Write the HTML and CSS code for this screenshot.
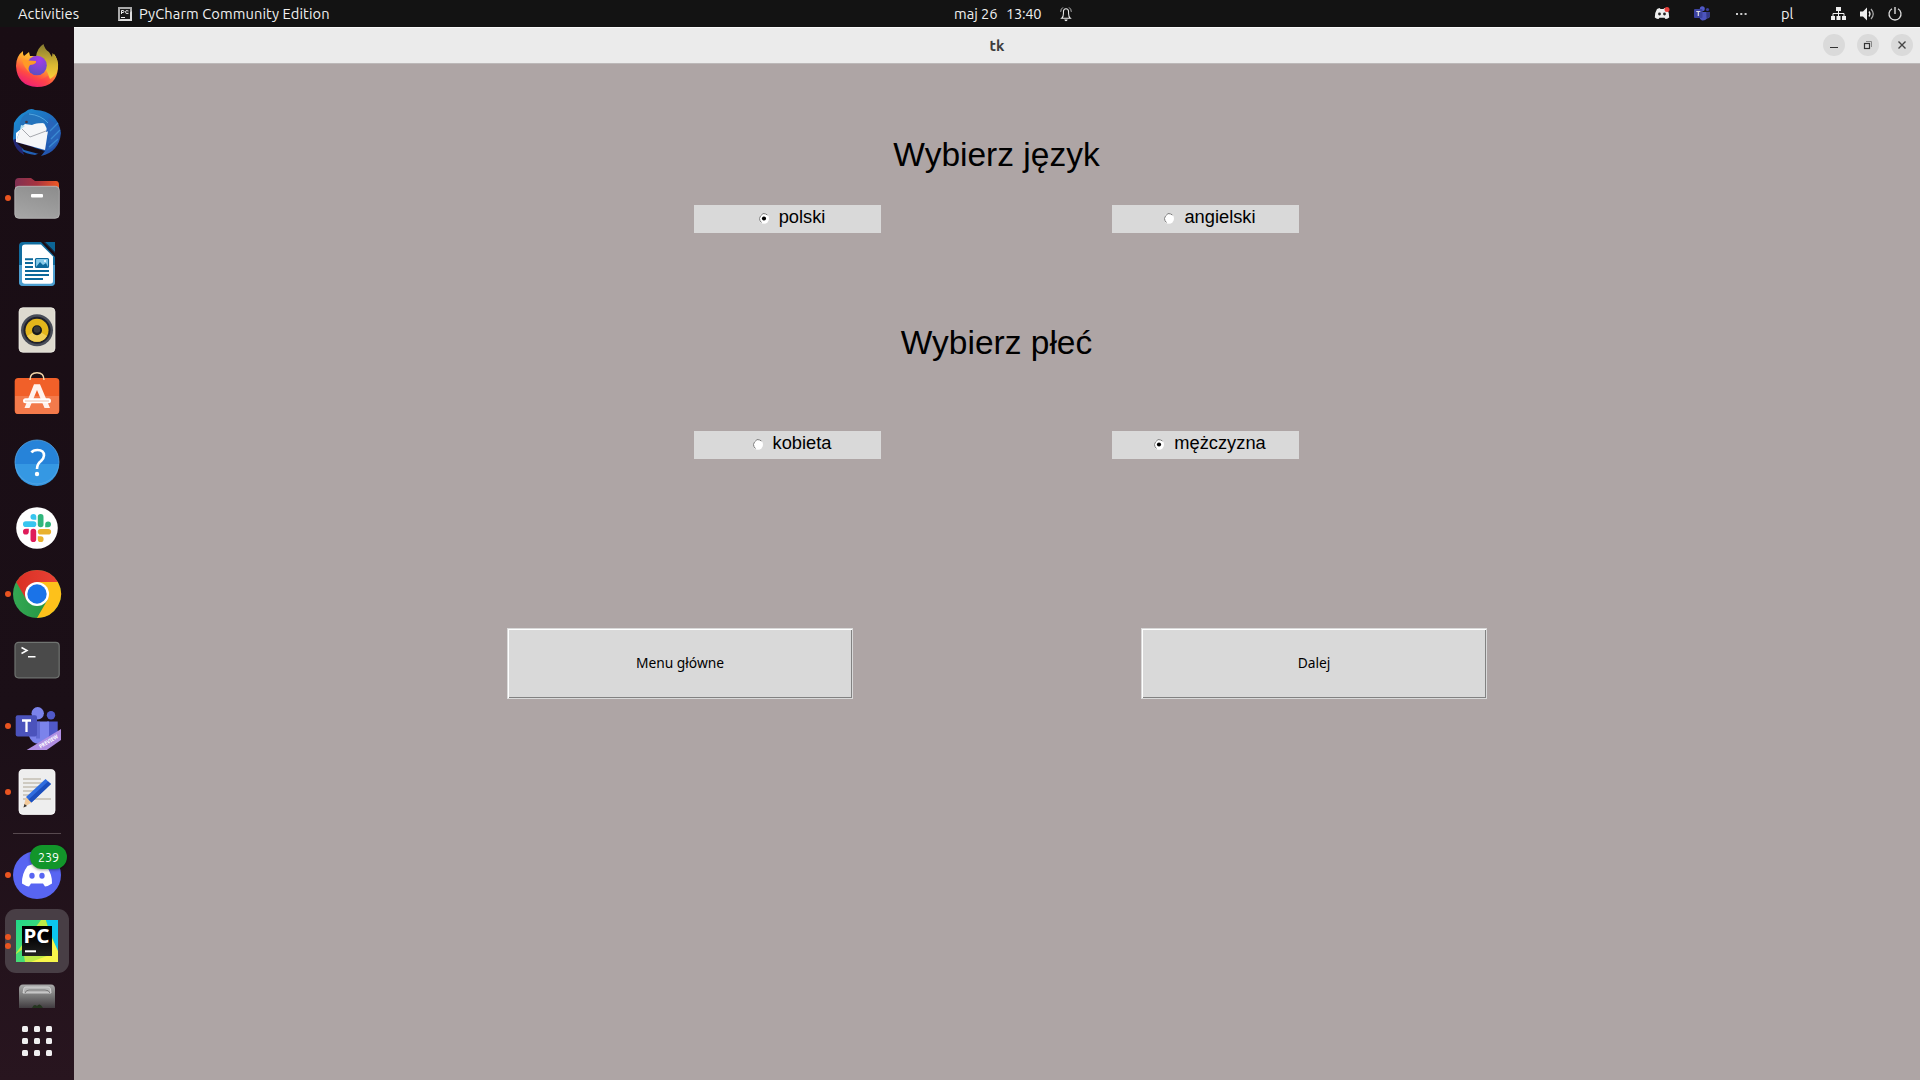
FILE: index.html
```html
<!DOCTYPE html>
<html lang="pl">
<head>
<meta charset="utf-8">
<title>tk</title>
<link rel="stylesheet" href="styles.css">
</head>
<body>
<header class="topbar">
  <div class="top-left">
    <span class="activities">Activities</span>
    <svg class="app-mini" viewBox="0 0 14 14"><rect width="14" height="14" fill="#aaa"/><path d="M0 14 14 4V14Z" fill="#ddd"/><rect x="2" y="2" width="10" height="10" fill="#1b1b1b"/><path d="M3.5 7V3.5H5Q6 3.5 6 4.5T5 5.5H3.5M10.5 4Q7.5 2.6 7.5 5T10.5 6.3M3 10.5H7" fill="none" stroke="#eee"/></svg>
    <span class="app-name">PyCharm Community Edition</span>
  </div>
  <div class="top-center">
    <span class="date">maj 26</span><span class="time">13:40</span>
    <svg class="bell" viewBox="0 0 14 17"><path d="M2 13.5Q4 12 4 8V6Q4 2.5 7 2.5T10 6V8Q10 12 12 13.5Z" fill="none" stroke="#eee" stroke-width="1.2"/><path d="M5 15H9Q8.500 17 7 17T5 15" fill="#eee"/><path d="M3.500 .8Q.8 2.500 .8 6M10.500 .8Q13.200 2.500 13.200 6" fill="none" stroke="#ccc"/></svg>
  </div>
  <div class="top-right">
    <svg class="t-discord" viewBox="0 0 16 13"><path d="M3 2 5.500 1 6.500 2H9.500L10.500 1 13 2Q15.500 6 15.200 10.500 13 12 11.500 12L10.500 10.800H5.500L4.500 12Q3 12 .8 10.500.500 6 3 2Z" fill="#eee"/><circle cx="5.500" cy="7" r="1.400" fill="#222"/><circle cx="10.500" cy="7" r="1.400" fill="#222"/><circle cx="13" cy="2.500" r="2.500" fill="#e8403c"/></svg>
    <svg class="t-teams" viewBox="0 0 16 15"><circle cx="8.300" cy="2.700" r="2.500" fill="#5059c9"/><circle cx="13.500" cy="3.500" r="1.600" fill="#393f9c"/><path d="M5 6H16V10Q15.500 12.500 13 12.500 11 15 8 14.500 5.500 13.500 5 10Z" fill="#4c54bd"/><path d="M12.200 6H16V10Q15.500 12.500 12.500 12Z" fill="#343985"/><rect x="0" y="3" width="8.500" height="9" rx="1" fill="#3c439f"/><path d="M2.300 5.500H6.300M4.300 5.500V10" stroke="#ddd" stroke-width="1.200"/></svg>
    <svg class="t-more" viewBox="0 0 11 2"><path d="M0 0H2V2H0ZM4.300 0H6.300V2H4.300ZM8.600 0H10.600V2H8.600Z" fill="#ccc"/></svg>
    <span class="lang">pl</span>
    <svg class="t-net" viewBox="0 0 15 13"><path d="M5 0H10V4H5ZM0 9H4V13H0ZM5.500 9H9.500V13H5.500ZM11 9H15V13H11Z" fill="#eee"/><path d="M7.500 4V9M2 9V6.500H13V9" fill="none" stroke="#eee"/></svg>
    <svg class="t-vol" viewBox="0 0 15 14"><path d="M0 4.500H3L7 .5V13.500L3 9.500H0Z" fill="#eee"/><path d="M9 4.500Q11 7 9 9.500" fill="none" stroke="#eee" stroke-width="1.300"/><path d="M11 2Q15.500 7 11 12" fill="none" stroke="#aaa" stroke-width="1.200"/></svg>
    <svg class="t-power" viewBox="0 0 14 14"><path d="M4 1.800A6 6 0 1 0 10 1.800" fill="none" stroke="#ddd" stroke-width="1.300"/><path d="M7 0V7" stroke="#eee" stroke-width="1.300"/></svg>
  </div>
</header>
<div class="desktop">
<nav class="dock">
  <div class="item">
    <svg viewBox="0 0 48 48"><defs><linearGradient id="ff" x1=".8" y1="0" x2=".25" y2="1"><stop offset="0" stop-color="#fff044"/><stop offset=".4" stop-color="#ffa930"/><stop offset=".7" stop-color="#ff4a43"/><stop offset="1" stop-color="#e31587"/></linearGradient><linearGradient id="ft" x1="0" y1="0" x2="0" y2="1"><stop offset="0" stop-color="#857a30"/><stop offset=".6" stop-color="#d9b832"/><stop offset="1" stop-color="#ffce38"/></linearGradient><radialGradient id="fp" cx=".6" cy=".2" r=".8"><stop offset="0" stop-color="#a63bea"/><stop offset="1" stop-color="#5e4fc0"/></radialGradient></defs><path d="M3 24Q3 14 10 9 9.500 12 11 14L16 10 17 14Q26 13 34 20 40 17 41 12 45 17 45 25 44 45 24 45 4 44 3 24Z" fill="url(#ff)"/><path d="M23 15Q24 6 30.500 2 31.500 7 36 10L39 15 39.500 11Q46 17 45 26 43 34 37 37 32 22 23 15Z" fill="url(#ft)"/><circle cx="24" cy="23.500" r="9.800" fill="url(#fp)"/><path d="M9 18 23 19Q24 22 17 23 14 27 17 31 11 26 9 18Z" fill="#ff9a26"/><path d="M10 36Q22 46 36 36" fill="none" stroke="#ff3058" stroke-width="5" opacity=".35"/></svg>
  </div>
  <div class="item">
    <svg viewBox="0 0 48 48"><defs><linearGradient id="tb" x1="0" y1="0" x2="1" y2="1"><stop offset="0" stop-color="#1c91d4"/><stop offset="1" stop-color="#2449a8"/></linearGradient></defs><path d="M1 15Q5 7 12 4 17-1 22 2 45 3 48 25 46 44 28 48L32 43 22 47Q4 45 0 31Z" fill="url(#tb)"/><path d="M0 32Q2 42 11 47L8 37 24 43 10 28Z" fill="#222775"/><path d="M3 34 32 43 26 46 11 42Z" fill="#190d14"/><path d="M7 22 11 16 31 15 35 23 32 42 3 34Z" fill="#f5f6f8"/><path d="M4 34Q4 28 8 21L3 25V34Z" fill="#fff"/><path d="M9 21 17 29 33 23" fill="none" stroke="#a6a8ae" stroke-width="1"/><path d="M7 20Q6 8 15 5 28 4 32 16 27 13 19 17L12 16Z" fill="#2474bd"/><path d="M16 6Q28 7 35 15" fill="none" stroke="#66bbec" stroke-width=".7"/><path d="M36 10 33 24 36 23 34 30 38 28 34 36 39 34 33 43Q48 38 47 21Z" fill="#2864b9"/><path d="M45 15 37 23M47 22 38 31M45 31 36 39" stroke="#3a8bd3" stroke-width="1.300"/><path d="M8 17 7 22 12 18Z" fill="#b2e0ef"/><circle cx="13.500" cy="14" r="1.300" fill="#463541"/></svg>
  </div>
  <div class="item">
    <span class="dots"><i></i></span>
    <svg viewBox="0 0 48 48"><defs><linearGradient id="fo"><stop offset="0" stop-color="#803052"/><stop offset=".5" stop-color="#a8333f"/><stop offset="1" stop-color="#f05a24"/></linearGradient><linearGradient id="fg" x1=".7" y1="0" x2=".3" y2="1"><stop stop-color="#8e8e8e"/><stop offset="1" stop-color="#a5a5a5"/></linearGradient></defs><path d="M2 15V8Q2 4 6 4H18L22 7H43Q46 7 46 11V17H2Z" fill="url(#fo)"/><rect x="1.800" y="12.300" width="44.500" height="32" rx="4" fill="url(#fg)" stroke="#bfbfbf" stroke-width=".8"/><rect x="18" y="20" width="12" height="3.500" rx="1" fill="#fff"/></svg>
  </div>
  <div class="item">
    <svg viewBox="0 0 48 48"><path d="M10 2H31L42 13V42Q42 46 38 46H10Q6 46 6 42V6Q6 2 10 2Z" fill="#116d9f"/><path d="M6 25H42V42Q42 46 38 46H10Q6 46 6 42Z" fill="#4d9fd0"/><path d="M12 4.500H28L40 16.500V41Q40 43.700 37 43.700H12Q9 43.700 9 41V7Q9 4.500 12 4.500Z" fill="#fff"/><path d="M28 2H31L42 13V17Z" fill="#190d14"/><path d="M32 2H42V12Z" fill="#0c6595"/><path d="M12 19.300H20M12 23H20M12 27H20M12 31H36M12 35H36M12 39H30" stroke="#0c689a" stroke-width="1.900"/><rect x="22.500" y="18.500" width="13" height="9" rx="1" fill="#85cae9" stroke="#0c689a" stroke-width="1.200"/><path d="M23 27 27 22 30 25 33 23 35 27Z" fill="#0c689a"/><circle cx="32" cy="21" r="1" fill="#fff"/></svg>
  </div>
  <div class="item">
    <svg viewBox="0 0 48 48"><rect x="6" y="1.700" width="36" height="44.600" rx="4" fill="#dedacf" stroke="#f5f4ed" stroke-width=".7"/><circle cx="24" cy="24.300" r="16" fill="#494d58"/><circle cx="24" cy="24.300" r="13.500" fill="#20212a"/><circle cx="24" cy="24.300" r="11.500" fill="#e4b61b"/><path d="M14 30A11.500 11.500 0 0 0 34 30L24 24Z" fill="#f0ce55"/><circle cx="24" cy="24.300" r="5" fill="#171a1d"/><circle cx="24" cy="23.500" r="3.300" fill="#3a3a38"/></svg>
  </div>
  <div class="item">
    <svg viewBox="0 0 48 48"><rect x="1.700" y="6" width="44.600" height="36" rx="3.500" fill="#f16029"/><path d="M2 24H46V38Q46 42 43 42H5Q2 42 2 38Z" fill="#f37a4b"/><path d="M17 8Q17 .8 24 .8T31 8" fill="none" stroke="#f3d5a8" stroke-width="1.500"/><path d="M21 12.300H27L37 36H31.500L24 18 16.500 36H11.500Z" fill="#fff2ed"/><rect x="10" y="26.300" width="28" height="5" rx="2.500" fill="#fff"/><path d="M12 29H36" stroke="#e8ac92" stroke-width=".8"/></svg>
  </div>
  <div class="item">
    <svg viewBox="0 0 48 48"><circle cx="24" cy="24" r="22" fill="#2683d9"/><path d="M2 26H46A22 22 0 0 1 2 26" fill="#3598e3"/><circle cx="24" cy="24" r="22" fill="none" stroke="#55a6e5" stroke-width=".8"/><path d="M18.500 14.500Q20 12 24.500 12 31 12 31 17.500 31 20 28 23 24 26 24 31" fill="none" stroke="#fff" stroke-width="2.600"/><circle cx="24" cy="36" r="2.200" fill="#fff"/></svg>
  </div>
  <div class="item">
    <svg viewBox="0 0 48 48"><circle cx="24" cy="24" r="20.800" fill="#fff"/><g fill="#37c5ef"><rect x="10" y="17.300" width="13.300" height="5.700" rx="2.800"/><path d="M23.300 15.700H20.300A2.900 2.900 0 1 1 23.300 12.800Z"/></g><g fill="#30b67c"><rect x="24.800" y="10" width="5.700" height="13.300" rx="2.800"/><path d="M32.200 23.200V20.200A2.900 2.900 0 1 1 35.100 23.200Z"/></g><g fill="#e9b12d"><rect x="24.800" y="24.900" width="13.300" height="5.700" rx="2.800"/><path d="M24.800 32.300H27.800A2.900 2.900 0 1 1 24.800 35.200Z"/></g><g fill="#df1b5a"><rect x="17.500" y="24.700" width="5.700" height="13.300" rx="2.800"/><path d="M15.800 24.800V27.800A2.900 2.900 0 1 1 12.900 24.800Z"/></g></svg>
  </div>
  <div class="item">
    <span class="dots"><i></i></span>
    <svg viewBox="0 0 48 48"><defs><linearGradient id="cr"><stop stop-color="#d93025"/><stop offset="1" stop-color="#e94235"/></linearGradient><linearGradient id="cg"><stop stop-color="#34a853"/><stop offset="1" stop-color="#1e8e3e"/></linearGradient></defs><circle cx="24" cy="24" r="24" fill="url(#cg)"/><path d="M44.800 12A24 24 0 0 1 24 48L34.400 30 24 12Z" fill="#fdc11b"/><path d="M3.200 12A24 24 0 0 1 44.800 12H24L13.600 30Z" fill="url(#cr)"/><circle cx="24" cy="24" r="12" fill="#fff"/><circle cx="24" cy="24" r="9.700" fill="#1a73e8"/></svg>
  </div>
  <div class="item">
    <svg viewBox="0 0 48 48"><rect x="2" y="6.400" width="44.200" height="35.400" rx="3.500" fill="#4a4a4a" stroke="#707471" stroke-width="1.200"/><path d="M8.500 11.500 14 14.500 8.500 17.500M15 20.700H22.500" fill="none" stroke="#fff" stroke-width="1.500"/></svg>
  </div>
  <div class="item">
    <span class="dots"><i></i></span>
    <svg viewBox="0 0 48 48"><circle cx="24.700" cy="11.300" r="6.200" fill="#7b83eb"/><circle cx="38" cy="13.300" r="4.200" fill="#5059c9"/><path d="M34 19.500H44.700V34Q43 39 37 39H34Z" fill="#5059c9"/><path d="M17 19.500H36V33Q35 42 26 42 18 41 16 34Z" fill="#7b83eb"/><rect x="23" y="19.500" width="4" height="17" fill="#5660c7" opacity=".7"/><rect x="2.700" y="13.300" width="21.300" height="21.300" rx="2" fill="#4b53bc"/><path d="M9 18.500H18M13.500 18.500V30" stroke="#fff" stroke-width="2.300"/><path d="M13.700 48 48 27V38L33.700 48Z" fill="#b08fe3"/><text class="preview" transform="translate(27.500 46.500) rotate(-31)" textLength="21" lengthAdjust="spacingAndGlyphs">PREVIEW</text></svg>
  </div>
  <div class="item">
    <span class="dots"><i></i></span>
    <svg viewBox="0 0 48 48"><rect x="6" y="1.600" width="36" height="44.800" rx="4" fill="#eee" stroke="#fff" stroke-width=".8"/><path d="M10 11H28M10 15H33M10 19H28M10 23H26M10 27H22M10 31H38" stroke="#c4bfb3" stroke-width="1.700"/><path d="M10.500 39.500 13 29 18.500 34.500Z" fill="#f2c99a"/><path d="M10.500 39.500 11.500 36 14 38Z" fill="#333"/><path d="M13 29 32.500 11 38 16 18.500 34.500Z" fill="#2f6cdf"/><path d="M15.500 31.500 35 13.500 38 16 18.500 34.500Z" fill="#1c4ebc"/></svg>
  </div>
  <hr class="separator">
  <div class="item">
    <span class="dots"><i></i></span>
    <svg viewBox="0 0 48 48"><circle cx="24" cy="24" r="24" fill="#5865f2"/><path d="M14.500 15 20 13 21.500 15H26.500L28 13 33.500 15Q39.500 24 39 32.500 35.500 35 32 35.500L30 32.500H18L16 35.500Q12.500 35 9 32.500 8.500 23 14.500 15Z" fill="#fff"/><ellipse cx="19" cy="24.700" rx="2.700" ry="3" fill="#5865f2"/><ellipse cx="29" cy="24.700" rx="2.700" ry="3" fill="#5865f2"/></svg>
    <span class="badge">239</span>
  </div>
  <div class="item active">
    <span class="dots"><i></i><i></i></span>
    <svg viewBox="0 0 48 48"><defs><linearGradient id="pg" x1="0" y1="0" x2="1" y2="1"><stop stop-color="#21d789"/><stop offset="1" stop-color="#6be05e"/></linearGradient><linearGradient id="pk" x1="0" y1="0" x2="0" y2="1"><stop offset=".3" stop-color="#000"/><stop offset="1" stop-color="#222"/></linearGradient></defs><rect x="3" y="3" width="42" height="42" fill="url(#pg)"/><path d="M3 36 28 3H33L40 30V45H3Z" fill="#bdea47"/><path d="M33 3H45V36Z" fill="#0cc6ee"/><path d="M33 8 45 34V45H18L39 37Z" fill="#f8f64a"/><path d="M3 37 10 32 12 45H3Z" fill="#45dc77"/><rect x="9" y="9" width="30" height="30" fill="url(#pk)"/><rect x="12" y="33.300" width="11" height="2" fill="#fff"/><text class="pc" x="10.500" y="26.300" textLength="26" lengthAdjust="spacingAndGlyphs">PC</text></svg>
  </div>
  <div class="trash">
    <svg viewBox="0 0 38 24"><defs><linearGradient id="tr" x1="0" y1="0" x2="0" y2="1"><stop stop-color="#aaa"/><stop offset=".5" stop-color="#777"/><stop offset="1" stop-color="#413c40"/></linearGradient></defs><path d="M1 24V5Q1 .5 5 .5H33Q37 .5 37 5V24Z" fill="url(#tr)"/><path d="M5 9 6 4Q6.500 3 8 3H30Q32 3 32.500 5L33 9Z" fill="#b6b6b6" stroke="#ddd" stroke-width=".8"/><path d="M7 9Q8 6 11 6H27Q31 6 32 9" fill="none" stroke="#777"/><path d="M14 24Q16 19 19 22 22 18 25 24Z" fill="#24351f"/></svg>
  </div>
  <div class="apps"><i></i><i></i><i></i><i></i><i></i><i></i><i></i><i></i><i></i></div>
</nav>
<main class="window">
  <div class="titlebar">
    <span class="title">tk</span>
    <div class="controls">
      <span class="ctl"><svg viewBox="0 0 22 22"><path d="M7 13.500H15" stroke="#333"/></svg></span>
      <span class="ctl"><svg viewBox="0 0 22 22"><path d="M9 7.500H14.500V13" fill="none" stroke="#888"/><rect x="7.500" y="9.500" width="5" height="5" fill="none" stroke="#333" stroke-width="1.200"/></svg></span>
      <span class="ctl"><svg viewBox="0 0 22 22"><path d="M7.500 7.500 14.500 14.500M14.500 7.500 7.500 14.500" stroke="#444" stroke-width="1.400"/></svg></span>
    </div>
  </div>
  <div class="content">
    <h1 class="heading lang-heading">Wybierz język</h1>
    <div class="radios">
      <label class="radio"><svg viewBox="0 0 10 11"><ellipse cx="5" cy="5.500" rx="5" ry="5.200" fill="#fff"/><path d="M2.500 9.500Q.5 8 .5 5.500T4 .6Q6.500 .4 8.500 2" fill="none" stroke="#777"/><circle cx="5" cy="5.500" r="2.100" fill="#000"/></svg><span>polski</span></label>
      <label class="radio"><svg viewBox="0 0 10 11"><ellipse cx="5" cy="5.500" rx="5" ry="5.200" fill="#fff"/><path d="M2.500 9.500Q.5 8 .5 5.500T4 .6Q6.500 .4 8.500 2" fill="none" stroke="#777"/></svg><span>angielski</span></label>
    </div>
    <h1 class="heading sex-heading">Wybierz płeć</h1>
    <div class="radios second">
      <label class="radio"><svg viewBox="0 0 10 11"><ellipse cx="5" cy="5.500" rx="5" ry="5.200" fill="#fff"/><path d="M2.500 9.500Q.5 8 .5 5.500T4 .6Q6.500 .4 8.500 2" fill="none" stroke="#777"/></svg><span>kobieta</span></label>
      <label class="radio"><svg viewBox="0 0 10 11"><ellipse cx="5" cy="5.500" rx="5" ry="5.200" fill="#fff"/><path d="M2.500 9.500Q.5 8 .5 5.500T4 .6Q6.500 .4 8.500 2" fill="none" stroke="#777"/><circle cx="5" cy="5.500" r="2.100" fill="#000"/></svg><span>mężczyzna</span></label>
    </div>
    <div class="buttons">
      <button class="btn"><span>Menu główne</span></button>
      <button class="btn"><span>Dalej</span></button>
    </div>
  </div>
</main>
</div>
</body>
</html>
```
FILE: styles.css
```css
* { box-sizing: border-box; }
body { margin: 0; width: 1920px; height: 1080px; overflow: hidden; font-family: Ubuntu, "Noto Sans", sans-serif; display: flex; flex-direction: column; }
svg { display: block; flex: none; overflow: visible; }
i { display: block; }

.topbar { height: 27px; flex: none; background: #131313; color: #f0f0f0; font-size: 14.670px; line-height: 27px; display: grid; grid-template-columns: 1fr 120px 1fr; white-space: nowrap; }
.top-left { display: flex; align-items: center; padding-left: 18px; }
.activities { width: 100px; letter-spacing: .1px; }
.app-mini { width: 14px; height: 14px; margin-right: 7px; }
.app-name { letter-spacing: .1px; }
.top-center { display: flex; align-items: center; margin-left: 54px; }
.date { width: 52px; flex: none; }
.time { width: 54px; flex: none; letter-spacing: -.3px; }
.bell { width: 12px; height: 16px; }
.top-right { display: flex; align-items: center; justify-content: flex-end; padding-right: 18px; }
.t-discord { width: 16px; height: 13px; margin-right: 24px; }
.t-teams { width: 16px; height: 15px; margin-right: 26px; }
.t-more { width: 11px; height: 2px; margin-right: 34px; }
.lang { width: 50px; }
.t-net { width: 15px; height: 13px; margin-right: 14px; }
.t-vol { width: 15px; height: 14px; margin-right: 13px; }
.t-power { width: 14px; height: 14px; }

.desktop { flex: 1; display: flex; min-height: 0; }
.dock { width: 74px; flex: none; padding-top: 6px; background: linear-gradient(#190d14, #1b0f17 65%, #28151f); display: flex; flex-direction: column; }
.item { position: relative; height: 66px; flex: none; display: flex; align-items: center; justify-content: center; }
.item > svg { width: 48px; height: 48px; }
.dots { position: absolute; left: 5px; top: 0; height: 66px; display: flex; flex-direction: column; justify-content: center; gap: 3px; }
.dots i { width: 6px; height: 6px; border-radius: 50%; background: #e95420; }
.active::before { content: ""; position: absolute; left: 5px; top: 1px; width: 64px; height: 64px; border-radius: 11px; background: #483e45; }
.active > svg { position: relative; }
.preview { font: bold 5.500px "Noto Sans", sans-serif; fill: #fff; }
.pc { font: bold 19px "Noto Sans", sans-serif; fill: #fff; }
.badge { position: absolute; left: 30px; top: 3px; width: 37px; height: 24px; border-radius: 12px; background: #12952a; color: #fff; font-size: 12.500px; line-height: 24px; text-align: center; box-shadow: 0 1px 3px #0006; }
.separator { width: 48px; height: 1px; margin: 8px 13px; border: 0; background: #57494f; flex: none; }
.trash { height: 34px; flex: none; padding: 10px 18px 0; }
.trash svg { width: 38px; height: 24px; }
.apps { display: grid; grid-template-columns: repeat(3, 6px); grid-auto-rows: 6px; gap: 6px; padding: 18px 22px 0; }
.apps i { background: #f0eff0; border-radius: 1.500px; }

.window { flex: 1; min-width: 0; background: #aea5a5; display: flex; flex-direction: column; }
.titlebar { height: 37px; flex: none; background: #ebebeb; border-top: 1px solid #fafafa; border-bottom: 1px solid #bcb8b8; display: grid; grid-template-columns: 1fr auto 1fr; align-items: center; }
.title { grid-column: 2; font-size: 15px; font-weight: 700; color: #3d3d3d; line-height: 20px; }
.controls { display: flex; gap: 12px; justify-content: flex-end; padding: 0 7px 1px 0; }
.ctl { width: 22px; height: 22px; border-radius: 50%; background: #dadada; }
.ctl svg { width: 22px; height: 22px; }

.content { padding-top: 71px; display: flex; flex-direction: column; }
.heading { margin: 0; text-align: center; font: 400 33.500px/40px "Liberation Sans", Arial, sans-serif; color: #000; }
.lang-heading, .sex-heading { padding-right: 1px; }
.radios { margin-top: 30px; padding-right: 2px; display: flex; justify-content: center; gap: 231px; }
.radio { width: 187px; height: 28px; padding-left: 10px; background: #d9d9d9; display: flex; justify-content: center; font: 18.300px/24px "Liberation Sans", Arial, sans-serif; color: #000; }
.radio svg { width: 10px; height: 11px; margin: 8px 10px 0 0; }
.sex-heading { margin-top: 90px; }
.radios.second { margin-top: 68px; }
.buttons { margin-top: 169px; display: flex; justify-content: center; gap: 288px; }
.btn { width: 346px; height: 71px; padding: 0 0 2px; border: 1px solid #d9d9d9; background: #d9d9d9; box-shadow: inset 1px 1px #fff, inset -1px -1px #828282; font: 13.800px "Noto Sans", sans-serif; color: #000; }
```
